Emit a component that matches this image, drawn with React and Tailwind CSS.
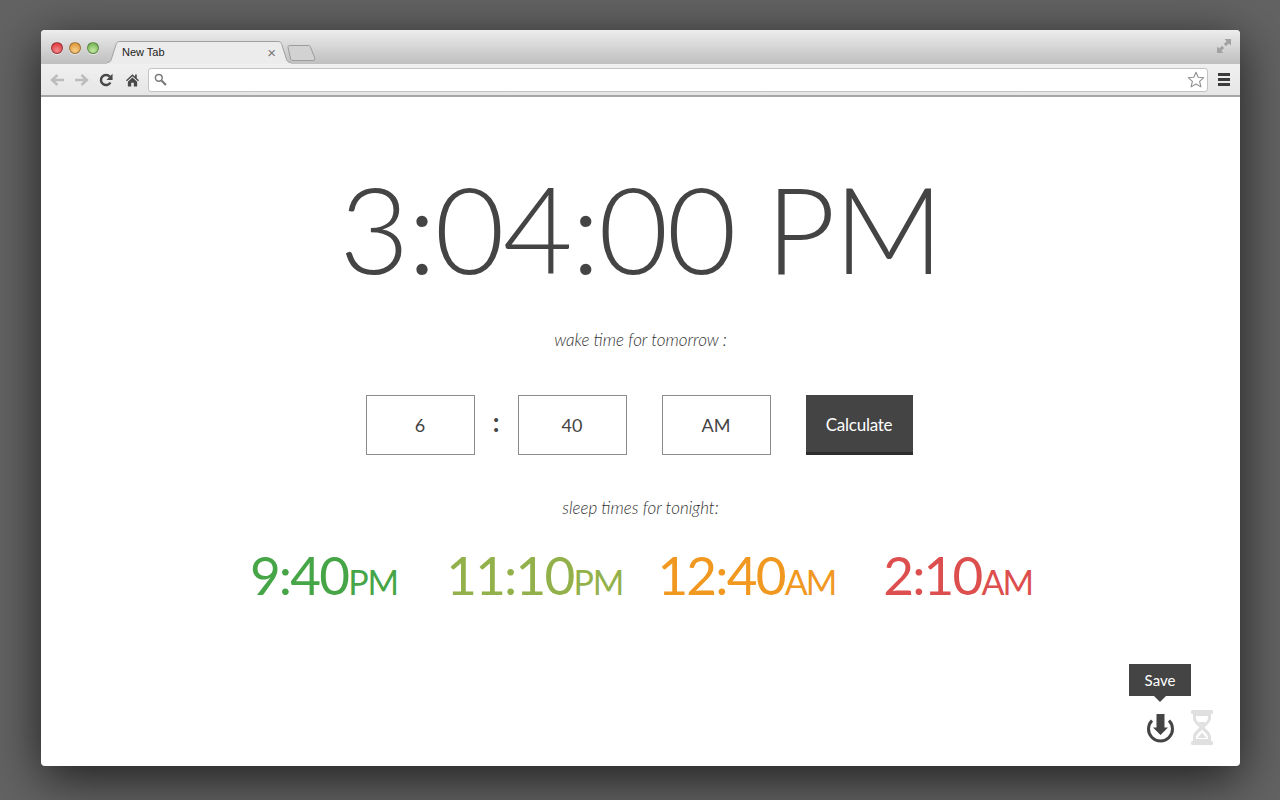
const Light = ({ color }) => (
  <span className={`w-[12px] h-[12px] rounded-full border border-black/30 shadow-[0_1px_0_rgba(255,255,255,0.6)] ${color}`} />
);

const TabShape = () => (
  <svg className="absolute left-0 top-0" width="184" height="23" viewBox="0 0 184 23" fill="none">
    <path d="M0 21.5C2.5 21.5 3.6 20.5 4.3 18.5L9 3.5C9.6 1.5 10.8 .5 13 .5H171C173 .5 174.2 1.5 174.8 3.5L179.5 18.5C180.2 20.5 181.5 21.5 184 21.5V23H0Z" fill="#ececec" />
    <path d="M0 21.5C2.5 21.5 3.6 20.5 4.3 18.5L9 3.5C9.6 1.5 10.8 .5 13 .5H171C173 .5 174.2 1.5 174.8 3.5L179.5 18.5C180.2 20.5 181.5 21.5 184 21.5" stroke="#a0a0a0" />
  </svg>
);

const NewTabShape = () => (
  <svg width="29" height="16" viewBox="0 0 29 16" fill="none">
    <path d="M1 2.5C.8 1.2 1.5 .5 3 .5H21C22.5 .5 23 1 23.5 2L27.8 13C28.3 14.5 27.5 15.5 26 15.5H6C4.5 15.5 4 15 3.7 14Z" fill="#d2d2d2" stroke="#9c9c9c" />
  </svg>
);

const Arrow = ({ flip }) => (
  <svg width="14" height="12" viewBox="0 0 14 12" className={flip ? 'rotate-180' : ''} fill="none" stroke="#bcbcbc" strokeWidth="2.4">
    <path d="M14 6H3M7.5 1 2 6 7.5 11" />
  </svg>
);

const Reload = () => (
  <svg width="14" height="14" viewBox="0 0 15 15" fill="none">
    <path d="M12.2 10.2A5.4 5.4 0 1 1 11.6 4" stroke="#484848" strokeWidth="2.6" />
    <path d="M14.5 .8V7.6H8Z" fill="#484848" />
  </svg>
);

const Home = () => (
  <svg width="13" height="14" viewBox="0 0 14 14" fill="#484848" className="ml-[2px]">
    <path d="M7 .8 0 7.2 1 8.3 7 2.9 13 8.3 14 7.2 11.6 5V1H9.8V3.4Z" />
    <path d="M2 8.8 7 4.3 12 8.8V14H8.4V10H5.6V14H2Z" />
  </svg>
);

const Search = () => (
  <svg width="13" height="13" viewBox="0 0 13 13" fill="none" stroke="#7a7a7a">
    <circle cx="4.8" cy="4.8" r="3.4" strokeWidth="1.5" />
    <path d="M7.5 7.5 12 12" strokeWidth="2.2" />
  </svg>
);

const Star = () => (
  <svg width="18" height="17" viewBox="0 0 18 17" fill="#fff" stroke="#8f8f8f" strokeWidth="1.1">
    <path d="M9 1.2 11.2 6.2 16.8 6.7 12.6 10.4 13.9 15.9 9 13 4.1 15.9 5.4 10.4 1.2 6.7 6.8 6.2Z" strokeLinejoin="round" />
  </svg>
);

const Expand = () => (
  <svg width="14" height="14" viewBox="0 0 14 14" fill="#a2a2a2">
    <path d="M7.5 0H14V6.5L11.8 4.4 9 7.2 6.8 5 9.6 2.2Z" />
    <path d="M0 7.5V14H6.5L4.4 11.8 7.2 9 5 6.8 2.2 9.6Z" />
  </svg>
);

const SaveIcon = () => (
  <svg width="29" height="30" viewBox="0 0 29 30" fill="none">
    <path d="M6 7.5A12 12 0 1 0 23 7.5" stroke="#444" strokeWidth="3" />
    <path d="M10.5 1H18.5V14.5H22L14.5 22 7 14.5H10.5Z" fill="#444" />
  </svg>
);

const Hourglass = () => (
  <svg width="22" height="35" viewBox="0 0 22 35" fill="#e0e0e0">
    <rect x="0" y="0" width="22" height="4" rx="1.5" />
    <rect x="0" y="31" width="22" height="4" rx="1.5" />
    <path fillRule="evenodd" d="M2 4H20V8C20 12 16 15 13.5 17.5 16 20 20 23 20 27V31H2V27C2 23 6 20 8.5 17.5 6 15 2 12 2 8ZM5 6H17V8C17 11 13 14 11 16.5 9 14 5 11 5 8ZM11 19.5C9 22 5 24.5 5 27.5V29H17V27.5C17 24.5 13 22 11 19.5Z" />
    <path d="M7 12H15L11 16.5ZM6.5 28 11 22.5 15.5 28Z" />
  </svg>
);

const Field = ({ children }) => (
  <div className="w-[109px] h-[60px] border border-[#8c8c8c] flex items-center justify-center text-[18px] text-[#444]">
    {children}
  </div>
);

const SleepTime = ({ time, period, color, className = '' }) => (
  <div className={`${color} ${className} leading-none whitespace-nowrap`}>
    <span className="text-[53px] tracking-[-1.8px]">{time}</span>
    <span className={period === 'AM' ? 'text-[34px] tracking-[-2px]' : 'text-[34px] tracking-[-1px]'}>{period}</span>
  </div>
);

export default function App() {
  return (
    <div className="h-[800px] overflow-hidden bg-[#636363] pt-[30px] pl-[41px] font-['Lato',sans-serif]">
      <div className="w-[1199px] h-[736px] rounded-[4px] overflow-hidden flex flex-col bg-white shadow-[0_12px_50px_rgba(0,0,0,0.7)]">
        {/* Tab strip */}
        <div className="h-[34px] flex bg-gradient-to-b from-[#ededed] to-[#bfbfbf]">
          <div className="flex items-center gap-[6px] pl-[10px] pt-[2px] w-[66px]">
            <Light color="bg-[radial-gradient(circle_at_50%_75%,#f58a8c,#d5272d)]" />
            <Light color="bg-[radial-gradient(circle_at_50%_75%,#f8cf8a,#d98a26)]" />
            <Light color="bg-[radial-gradient(circle_at_50%_75%,#c4eaa0,#63a743)]" />
          </div>
          <div className="w-[183px] h-[23px] relative mt-[11px]">
            <TabShape />
            <div className="relative flex items-center justify-between pl-[15px] pr-[14px] h-[23px] font-['Liberation_Sans',sans-serif] text-[11px] text-[#222]">
              <span>New Tab</span>
              <span className="text-[#777] text-[15px] leading-none">×</span>
            </div>
          </div>
          <div className="pt-[15px] -ml-[3px]">
            <NewTabShape />
          </div>
          <div className="ml-auto pt-[9px] pr-[9px]">
            <Expand />
          </div>
        </div>
        {/* Toolbar */}
        <div className="h-[33px] flex items-center bg-gradient-to-b from-[#f0f0f0] to-[#e6e6e6] border-b-2 border-[#a6a6a6]">
          <div className="w-[107px] flex items-center pl-[9px] gap-[10.5px]">
            <Arrow />
            <Arrow flip />
            <Reload />
            <Home />
          </div>
          <div className="w-[1060px] h-[24px] bg-white border border-[#c4c4c4] rounded-[3px] flex items-center justify-between pl-[5px] pr-[2px]">
            <Search />
            <Star />
          </div>
          <div className="flex-1 flex flex-col items-center gap-[2px]">
            <span className="w-[12px] h-[3px] bg-[#3c3c3c]" />
            <span className="w-[12px] h-[3px] bg-[#3c3c3c]" />
            <span className="w-[12px] h-[3px] bg-[#3c3c3c]" />
          </div>
        </div>
        {/* Page */}
        <div className="flex-1 relative flex flex-col items-center text-[#444]">
          <h1 className="mt-[56px] text-[121px] tracking-[-1.9px] font-light leading-[150px] whitespace-nowrap">3:04:00 PM</h1>
          <p className="mt-[25px] italic font-light text-[17px] leading-[24px] text-[#333]">wake time for tomorrow :</p>
          <div className="mt-[43px] flex items-stretch -ml-[3px]">
            <Field>6</Field>
            <div className="w-[43px] flex justify-center text-[26px] font-bold leading-[54px]">:</div>
            <Field>40</Field>
            <div className="w-[35px]" />
            <Field>AM</Field>
            <button className="ml-[35px] w-[107px] h-[60px] pt-[2px] bg-[#444] border-b-[3px] border-[#2e2e2e] text-white text-[17px] tracking-[-0.25px]">Calculate</button>
          </div>
          <p className="mt-[41px] italic font-light text-[17px] leading-[24px] text-[#333]">sleep times for tonight:</p>
          <div className="mt-[28px] flex ml-[1px]">
            <SleepTime time="9:40" period="PM" color="text-[#46a546]" />
            <SleepTime time="11:10" period="PM" color="text-[#93b14a]" className="ml-[48px]" />
            <SleepTime time="12:40" period="AM" color="text-[#f0981f]" className="ml-[34px]" />
            <SleepTime time="2:10" period="AM" color="text-[#dd4f4f]" className="ml-[48px]" />
          </div>
          {/* Save tooltip */}
          <div className="absolute left-[1088px] top-[567px] w-[62px] h-[32px] bg-[#444] text-white text-[15px] flex items-center justify-center">
            Save
            <span className="absolute left-1/2 -ml-[6px] top-[32px] border-x-[6px] border-x-transparent border-t-[6px] border-t-[#444]" />
          </div>
          <div className="absolute left-[1105px] top-[616px]">
            <SaveIcon />
          </div>
          <div className="absolute left-[1150px] top-[613px]">
            <Hourglass />
          </div>
        </div>
      </div>
    </div>
  );
}
